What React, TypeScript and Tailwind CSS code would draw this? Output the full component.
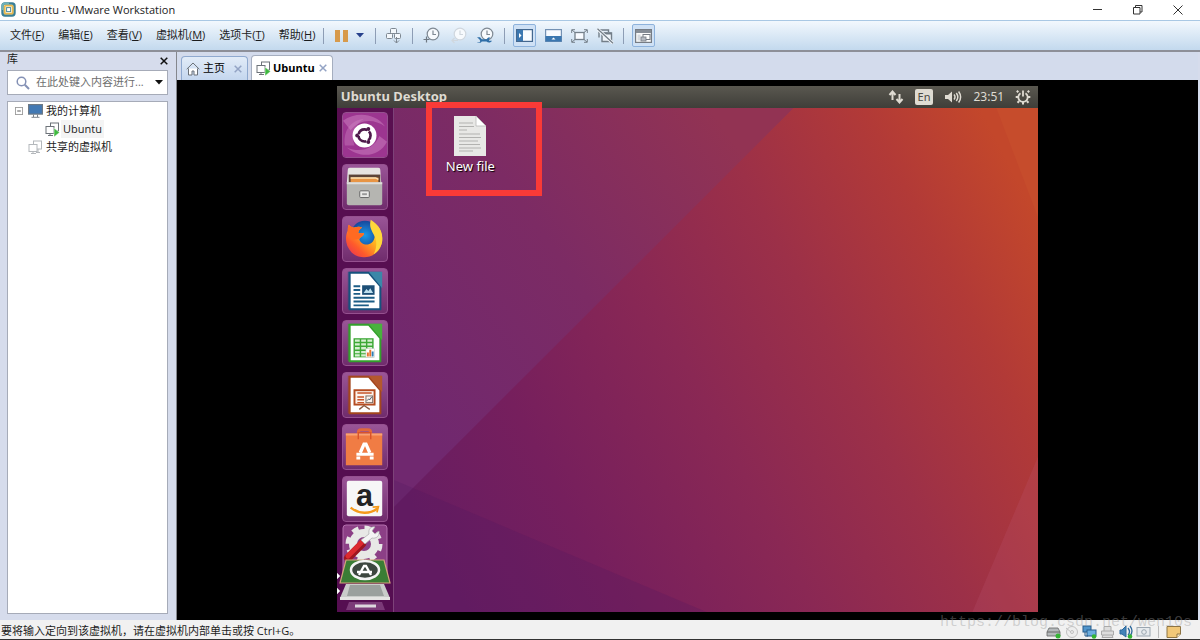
import React from "react";

const uiFont = "font-['Open_Sans','Noto_Sans_CJK_SC',sans-serif]";

const menus = [
  { label: "文件", hotkey: "F" },
  { label: "编辑", hotkey: "E" },
  { label: "查看", hotkey: "V" },
  { label: "虚拟机", hotkey: "M" },
  { label: "选项卡", hotkey: "T" },
  { label: "帮助", hotkey: "H" },
];

function Divider() {
  return <span className="h-4 w-px bg-[#8d9db5]" />;
}

function VmwareLogo() {
  return (
    <svg viewBox="0 0 16 16" className="size-4">
      <rect x="1.5" y="1.5" width="12" height="12" rx="2.5" fill="none" stroke="#3a7f96" strokeWidth="2.4" />
      <path d="M1.5 8V4A2.5 2.5 0 0 1 4 1.5H8" fill="none" stroke="#6fb2b8" strokeWidth="2" />
      <rect x="3.7" y="3.7" width="8" height="8" rx="1" fill="#fff" stroke="#e7b84c" strokeWidth="1.8" />
      <rect x="5.6" y="5.6" width="4" height="4" fill="#fff" stroke="#4f8d9d" strokeWidth="1" />
    </svg>
  );
}

function SendKeysIcon() {
  return (
    <svg viewBox="0 0 16 16" className="size-4" fill="#f4f8fc" stroke="#7d8791">
      <rect x="4.5" y="0.5" width="6" height="5" rx="1" />
      <rect x="0.5" y="5.5" width="6" height="5" rx="1" />
      <rect x="8.5" y="5.5" width="6" height="5" rx="1" />
      <path d="M10.5 9v6M8 12.500l2.500 2.500 2.500-2.500" fill="none" />
    </svg>
  );
}

type ClockProps = { kind: "take" | "revert" | "manage" };

function ClockIcon({ kind }: ClockProps) {
  const stroke = kind === "revert" ? "#d0d7de" : "#7f8993";
  return (
    <svg viewBox="0 0 17 17" className="size-[17px]" fill="none">
      <circle cx="10" cy="7" r="5.8" fill="#f7fafd" stroke={stroke} strokeWidth="1.2" />
      <path d="M10 3.5V7.5H13" stroke={stroke} strokeWidth="1.2" />
      {kind === "take" && <path d="M3.5 9.500v6M.5 12.500h6" stroke="#6e7882" strokeWidth="1.2" />}
      {kind === "revert" && <path d="M8 13.500H2M4.500 11L2 13.500L4.500 16" stroke={stroke} strokeWidth="1.2" />}
      {kind === "manage" && (
        <path d="M0 10.200h3l1.800 2h4.700l1.700-1.700h2.300l-1.500 1.700v1.600h3c-1 2-4 2.400-5.500.6H4.800c-1.300 1.900-3.600 2-4.800 1h2.500l.8-1.500-1-1.700z" fill="#2f6fa8" />
      )}
    </svg>
  );
}

function SidebarViewIcon() {
  return (
    <svg viewBox="0 0 17 13" className="h-[13px] w-[17px]">
      <rect x=".6" y=".6" width="15.8" height="11.8" fill="#f8fbff" stroke="#44688f" strokeWidth="1.2" />
      <rect x="1" y="1" width="6" height="11" fill="#3b77b0" />
      <path d="M3 4l2.500 2.500L3 9z" fill="#fff" />
    </svg>
  );
}

function ThumbnailViewIcon() {
  return (
    <svg viewBox="0 0 17 13" className="h-[13px] w-[17px]">
      <rect x=".6" y=".6" width="15.8" height="11.8" fill="#f8fbff" stroke="#7391b3" strokeWidth="1.2" />
      <rect x=".5" y="7" width="16" height="5.5" fill="#3b77b0" />
      <path d="M6.500 10.500l2-2 2 2z" fill="#fff" />
    </svg>
  );
}

function FullscreenIcon() {
  return (
    <svg viewBox="0 0 17 14" className="h-[14px] w-[17px]" fill="none" stroke="#75808a">
      <rect x="4" y="3.5" width="9" height="7" fill="#f8fbff" strokeWidth="1.3" />
      <path d="M.7 4V.7H4M13 .7h3.300V4M16.300 10v3.300H13M4 13.300H.7V10M1 1l3 2.500M16 1l-3 2.500M16 13l-3-2.500M1 13l3-2.500" />
    </svg>
  );
}

function UnityIcon() {
  return (
    <svg viewBox="0 0 17 16" className="h-4 w-[17px]" fill="none" stroke="#737e88">
      <path d="M2 9.500V2h9.500v2" strokeWidth="1.4" />
      <path d="M5 13.500V5h9.500v8.500z" fill="#eef4fa" strokeWidth="1.4" />
      <path d="M5 5.500h9.500" strokeWidth="2" />
      <path d="M.5.8l15.500 14.500" stroke="#f4f8fc" strokeWidth="3" />
      <path d="M.5.8l15.500 14.500" strokeWidth="1.3" />
    </svg>
  );
}

function ConsoleIcon() {
  return (
    <svg viewBox="0 0 17 14" className="h-[14px] w-[17px]">
      <rect x=".6" y=".6" width="15.8" height="12.8" fill="#fafafa" stroke="#767c84" strokeWidth="1.2" />
      <rect x="1" y="1" width="15" height="3" fill="#868d96" />
      <rect x="2.5" y="5.5" width="3" height="6" fill="#d5d9de" />
      <rect x="8" y="5.5" width="7" height="5" fill="#fff" stroke="#767c84" />
      <rect x="6" y="8" width="5" height="4" fill="#b6bbc2" stroke="#767c84" strokeWidth=".8" />
    </svg>
  );
}

function VmIcon({ running = true }: { running?: boolean }) {
  const stroke = running ? "#6d7379" : "#b4b8bc";
  return (
    <svg viewBox="0 0 15 15" className="size-[15px] shrink-0" fill="#fff" stroke={stroke}>
      <rect x="5.5" y="1" width="8" height="8" />
      <rect x="1" y="4.5" width="8" height="7" />
      <path d="M3 13.500h5M5 11.500v2" fill="none" />
      {running ? (
        <path d="M9 6v9l5.500-4.500z" fill="#3fb93f" stroke="#fff" strokeWidth=".5" />
      ) : (
        <path d="M8 12.500h4M10 9v3" fill="none" />
      )}
    </svg>
  );
}

function TitleBar() {
  return (
    <header className="flex h-5 shrink-0 items-center bg-white pl-px">
      <VmwareLogo />
      <h1 className="ml-[3px] flex-1 text-[11px] text-[#222]">Ubuntu - VMware Workstation</h1>
      <div className="flex items-center gap-6 pr-[14px] text-[#333]">
        <button aria-label="最小化" className="flex w-4 justify-center">
          <svg viewBox="0 0 10 10" className="size-[10px]" stroke="currentColor"><path d="M0 4.500h9" /></svg>
        </button>
        <button aria-label="还原" className="flex w-4 justify-center">
          <svg viewBox="0 0 10 10" className="size-[10px]" fill="none" stroke="currentColor">
            <path d="M.5 2.500h6.500V9H.5zM2.500 2.500V.5H9V7H7" />
          </svg>
        </button>
        <button aria-label="关闭" className="flex w-4 justify-center">
          <svg viewBox="0 0 10 10" className="size-[10px]" stroke="currentColor"><path d="M.5.5l9 9M9.500.5l-9 9" /></svg>
        </button>
      </div>
    </header>
  );
}

function MenuBar() {
  return (
    <div className="flex h-8 shrink-0 items-center border-t border-b-2 border-t-[#a9c8e4] border-b-[#8d8f98] bg-linear-to-b from-[#f2f8fd] to-[#c3d9ee] pl-[10px]">
      <nav className="flex gap-[14px] text-[11px] text-[#1c1c1c]">
        {menus.map((m) => (
          <button key={m.hotkey} className="whitespace-nowrap">
            {m.label}(<u>{m.hotkey}</u>)
          </button>
        ))}
      </nav>
      <div className="ml-2 flex items-center gap-[10px]">
        <Divider />
        <button aria-label="暂停" className="ml-px flex h-3 gap-[3px]">
          <span className="w-[5px] bg-[#d79a4b]" />
          <span className="w-[5px] bg-[#d79a4b]" />
        </button>
        <button aria-label="电源选项" className="-ml-[2px] mr-px">
          <svg viewBox="0 0 8 5" className="h-[5px] w-2" fill="#27418c"><path d="M0 0h8L4 4.500z" /></svg>
        </button>
        <Divider />
        <button aria-label="发送按键"><SendKeysIcon /></button>
        <Divider />
        <button aria-label="拍摄快照"><ClockIcon kind="take" /></button>
        <button aria-label="恢复快照"><ClockIcon kind="revert" /></button>
        <button aria-label="管理快照"><ClockIcon kind="manage" /></button>
        <Divider />
      </div>
      <div className="ml-2 flex items-center gap-[9px]">
        <button aria-label="显示库" className="flex h-[23px] w-[23px] items-center justify-center rounded-xs border border-[#8db2dc] bg-[#cfe1f5]">
          <SidebarViewIcon />
        </button>
        <button aria-label="缩略图栏"><ThumbnailViewIcon /></button>
        <button aria-label="全屏"><FullscreenIcon /></button>
        <button aria-label="Unity"><UnityIcon /></button>
        <Divider />
        <button aria-label="控制台视图" className="-ml-px flex h-[23px] w-[23px] items-center justify-center rounded-xs border border-[#8db2dc] bg-[#cfe1f5]">
          <ConsoleIcon />
        </button>
      </div>
    </div>
  );
}

function Library() {
  return (
    <aside className="flex w-[177px] shrink-0 flex-col border-r border-[#85878d] bg-[#d6dcec] pb-[6px] pl-[7px] pr-2 text-[11px] text-[#1c1c1c]">
      <div className="flex h-[18px] items-center justify-between">
        <h2 className="-mt-1">库</h2>
        <button aria-label="关闭库">
          <svg viewBox="0 0 8 8" className="size-2" stroke="#111" strokeWidth="1.5"><path d="M.7.7l6.600 6.600M7.300.7L.7 7.300" /></svg>
        </button>
      </div>
      <div className="flex h-[25px] items-center border border-[#a6abb8] bg-white pl-2 pr-1">
        <svg viewBox="0 0 14 14" className="size-[14px] shrink-0" fill="none" stroke="#8491b5">
          <circle cx="5.5" cy="5.5" r="4.3" strokeWidth="1.5" />
          <path d="M8.800 8.800l4.200 4.200" strokeWidth="2" />
        </svg>
        <input aria-label="搜索库" placeholder="在此处键入内容进行..." className="ml-[6px] min-w-0 flex-1 outline-none placeholder:text-[#6e6e6e]" />
        <button aria-label="搜索选项">
          <svg viewBox="0 0 8 5" className="h-[5px] w-2" fill="#111"><path d="M0 0h8L4 4.500z" /></svg>
        </button>
      </div>
      <ul className="mt-[6px] flex-1 border border-[#a6abb8] bg-white leading-[18px]">
        <li>
          <button className="flex h-[18px] items-center pl-[7px]">
            <svg viewBox="0 0 9 9" className="size-2" fill="#fff" stroke="#9a9a9a"><rect x=".5" y=".5" width="8" height="8" /><path d="M2.500 4.500h4" stroke="#444" /></svg>
            <svg viewBox="0 0 15 14" className="ml-[5px] h-[14px] w-[15px]">
              <rect x=".6" y=".6" width="13.8" height="9.5" fill="#4279b4" stroke="#6d7985" strokeWidth="1.2" />
              <path d="M5.500 10.500v2.500M9.500 10.500v2.500M3.500 13.300h8" stroke="#7b838b" />
            </svg>
            <span className="ml-[3px]">我的计算机</span>
          </button>
          <ul>
            <li>
              <button className="flex h-[18px] items-center pl-[37px]">
                <VmIcon />
                <span className="ml-px bg-[#f4f4f4] px-[2px]">Ubuntu</span>
              </button>
            </li>
          </ul>
        </li>
        <li>
          <button className="flex h-[18px] items-center pl-5">
            <VmIcon running={false} />
            <span className="ml-[3px]">共享的虚拟机</span>
          </button>
        </li>
      </ul>
    </aside>
  );
}

function TabClose({ label }: { label: string }) {
  return (
    <button aria-label={label}>
      <svg viewBox="0 0 8 8" className="size-2" stroke="#93a3c4" strokeWidth="1.5"><path d="M.7.7l6.600 6.600M7.300.7L.7 7.300" /></svg>
    </button>
  );
}

function TabBar() {
  return (
    <div className="flex h-7 shrink-0 items-end gap-[3px] bg-[#d3dbec] pl-1 text-[11px]">
      <div className="flex h-6 w-[67px] items-center rounded-t-sm border border-b-0 border-[#8fa9cf] bg-linear-to-b from-[#e2ecf8] to-[#c4d6ee] pl-1">
        <button className="flex flex-1 items-center gap-[3px] whitespace-nowrap">
          <svg viewBox="0 0 14 14" className="size-[14px]" fill="#fff" stroke="#6b7178" strokeLinejoin="round">
            <path d="M2.500 6.500v6.500h3.500V9h2v4h3.500V6.500" />
            <path d="M.7 7.200L7 1l6.300 6.200" fill="none" />
          </svg>
          主页
        </button>
        <span className="mr-[5px] flex"><TabClose label="关闭主页" /></span>
      </div>
      <div className="flex h-[25px] w-[82px] items-center rounded-t-sm border border-b-0 border-[#a5aebf] bg-white pl-1">
        <button className="flex flex-1 items-center gap-[2px] font-bold">
          <VmIcon />
          Ubuntu
        </button>
        <span className="mr-[5px] flex"><TabClose label="关闭 Ubuntu" /></span>
      </div>
    </div>
  );
}

function DashIcon() {
  return (
    <svg viewBox="0 0 46 46" className="size-full">
      <rect width="46" height="46" fill="#9c3590" />
      <path d="M0 8C14-2 34 0 44 14C32 6 18 6 8 18z" fill="#d58bc8" opacity=".45" />
      <path d="M46 30C38 46 18 48 4 36C18 42 32 38 38 24z" fill="#d58bc8" opacity=".45" />
      <path d="M2 34C0 18 8 8 22 6C12 12 8 22 12 34z" fill="#d58bc8" opacity=".35" />
      <circle cx="22.5" cy="23.5" r="12.5" fill="#fff" />
      <circle cx="22.5" cy="23.5" r="6.3" fill="none" stroke="#4e1a4b" strokeWidth="2.8" strokeDasharray="11.2 2" strokeDashoffset="5.6" />
      <circle cx="14.8" cy="23.5" r="2" fill="#4e1a4b" />
      <circle cx="26.5" cy="16.7" r="2" fill="#4e1a4b" />
      <circle cx="26.5" cy="30.3" r="2" fill="#4e1a4b" />
    </svg>
  );
}

function FilesIcon() {
  return (
    <svg viewBox="0 0 46 46" className="size-full">
      <path d="M7 3h30q2 0 2 2l1 14H4L5 5q0-2 2-2z" fill="#e6e4e1" />
      <rect x="6" y="10" width="33" height="10" fill="#5c4437" />
      <path d="M8 13h29v6H8z" fill="#e89545" />
      <path d="M8 13.500h26l3 1.500" stroke="#fbe3b5" fill="none" strokeWidth="1.5" />
      <path d="M4 18h37v22q0 2-2 2H6q-2 0-2-2z" fill="#b5b5b1" />
      <path d="M4 18h37v2H4z" fill="#dededb" />
      <rect x="17.5" y="27" width="10" height="7" rx="1" fill="#e9e9e7" stroke="#666" />
      <rect x="20" y="29.5" width="5" height="2" fill="#999" />
    </svg>
  );
}

function FirefoxIcon() {
  return (
    <svg viewBox="0 0 46 46" className="size-full">
      <defs>
        <linearGradient id="fox" x1="1" y1="0" x2="0" y2="1">
          <stop offset="0" stopColor="#fff04a" />
          <stop offset=".4" stopColor="#ffb21f" />
          <stop offset=".7" stopColor="#ff5a2b" />
          <stop offset="1" stopColor="#e42a5c" />
        </linearGradient>
        <radialGradient id="globe">
          <stop offset="0" stopColor="#1a9be8" />
          <stop offset="1" stopColor="#17479c" />
        </radialGradient>
      </defs>
      <circle cx="23" cy="19" r="15" fill="url(#globe)" />
      <path d="M6 8c2 2 4 3 6 3 3-1 6-1 8 0-3 2-4 4-4 6h6c0 3-4 4-5 6 1 5 8 8 13 4 5-5 4-14-1-20 5 2 7 5 8 9 0-3 0-4-1-7 6 8 7 18 1 26-7 9-21 9-28 2C2 30 2 20 5 14c0-2 0-4 1-6z" fill="url(#fox)" />
      <path d="M6 8c2 2 4 3 6 3 3-1 6-1 8 0-3 2-4 4-4 6h6c0 3-4 4-5 6l-7 1C5 21 4 13 6 8z" fill="#ff6a22" />
      <path d="M29 3c8 5 13 12 12 22-1 7-5 11-9 14 3-6 4-13 1-19-3-6-6-9-4-17z" fill="#ffd83a" />
    </svg>
  );
}

type OfficeProps = { color: string; fold: string; children: React.ReactNode };

function OfficeIcon({ color, fold, children }: OfficeProps) {
  return (
    <svg viewBox="0 0 46 46" className="size-full">
      <path d="M5 3h35v39H5z" fill={color} opacity=".55" />
      <path d="M7 4h20l12 14v24H7z" fill="#fff" stroke={color} strokeWidth="2" />
      <path d="M27 3h14v17z" fill={fold} />
      {children}
    </svg>
  );
}

function SoftwareIcon() {
  return (
    <svg viewBox="0 0 46 46" className="size-full">
      <path d="M16 14V8q0-3 3-3h7q3 0 3 3v6" fill="none" stroke="#e0683c" strokeWidth="3" />
      <path d="M3 9h38v33H3z" fill="#f07c44" />
      <path d="M3 9h38v2H3z" fill="#f9a273" />
      <path d="M16 15V8h13v7" fill="none" stroke="#d9532b" strokeWidth="1.5" />
      <path d="M18 29l4-9h2l4 9" fill="none" stroke="#fff" strokeWidth="3.5" />
      <path d="M14 30.500h18" stroke="#fff" strokeWidth="3.2" />
      <path d="M16 36v-3M30 36v-3" stroke="#fff" strokeWidth="4" />
    </svg>
  );
}

function AmazonIcon() {
  return (
    <svg viewBox="0 0 46 46" className="size-full">
      <rect x="4" y="4" width="37" height="37" rx="2" fill="#f7f7f7" />
      <text x="22.5" y="30" textAnchor="middle" fontSize="32" fontWeight="bold" fontFamily="Liberation Sans, sans-serif" fill="#222">a</text>
      <path d="M8 32c9 7 20 7 28 1" fill="none" stroke="#f59a1b" strokeWidth="2.5" />
      <path d="M31 31.500l6-.5-1.500 6" fill="none" stroke="#f59a1b" strokeWidth="1.8" />
    </svg>
  );
}

function StackedIcons() {
  return (
    <svg viewBox="0 0 57 88" className="absolute bottom-0 left-0 h-[88px] w-[57px]">
      <rect x="6" y="1" width="44" height="52" rx="3" fill="#8c3f86" stroke="#b26eac" />
      <circle cx="27" cy="20" r="11" fill="none" stroke="#e8e8e6" strokeWidth="8" />
      <circle cx="27" cy="20" r="16" fill="none" stroke="#e8e8e6" strokeWidth="5" strokeDasharray="6.570 6" />
      <path d="M11 34l14-14" stroke="#9d1620" strokeWidth="8" strokeLinecap="round" />
      <path d="M11 32l14-14" stroke="#dc2a2f" strokeWidth="5" strokeLinecap="round" />
      <path d="M24 16l8-6c-1-5 2-8 6-7l-3 4 3 3 4-3c1 5-3 8-7 7l-7 6z" fill="#f4f4f4" stroke="#aaa" strokeWidth=".7" />
      <path d="M3 59L9 36h38l6 23z" fill="#3a7d35" stroke="#d3a37c" strokeWidth="1.2" />
      <ellipse cx="28" cy="46" rx="14" ry="9" fill="#3d4740" stroke="#f5f5f5" strokeWidth="2.5" />
      <path d="M22 51l5-9h2l5 9M20 48h15" stroke="#fff" strokeWidth="2.3" fill="none" />
      <path d="M3 74L9 60h38l6 14z" fill="#c9ccc9" />
      <path d="M10 72l3-11h30l4 11z" fill="#9aa09d" />
      <path d="M3 73h50v3H3z" fill="#e4e4e2" />
      <path d="M12 78h33l3 8H9z" fill="#7b3a78" />
      <path d="M18 82h21" stroke="#ded7de" strokeWidth="3" />
      <path d="M0 49l3 3-3 3M0 64l3 3-3 3z" fill="#fff" stroke="#ddd" strokeWidth=".5" />
    </svg>
  );
}

const launcher = [
  { name: "Dash", icon: <DashIcon /> },
  { name: "Files", icon: <FilesIcon /> },
  { name: "Firefox", icon: <FirefoxIcon /> },
  {
    name: "Writer",
    icon: (
      <OfficeIcon color="#16527d" fold="#3b87a8">
        <path d="M11 18h7M11 22h7M11 26h7M11 30h22M11 34h22M11 38h16" stroke="#1c5d86" strokeWidth="2" />
        <rect x="20" y="17" width="13" height="10" fill="#1d4f76" />
        <path d="M21.500 25l3-4 2 2 2-3 3 5z" fill="#bfe0ee" />
      </OfficeIcon>
    ),
  },
  {
    name: "Calc",
    icon: (
      <OfficeIcon color="#33a02c" fold="#48b13d">
        <rect x="11" y="18" width="21" height="20" fill="#3da836" />
        <path d="M12.500 20.500h5M19 20.500h5M25.500 20.500h5M12.500 24.500h5M19 24.500h5M25.500 24.500h5M12.500 28.500h5M19 28.500h5M25.500 28.500h5M12.500 32.500h5M19 32.500h5M12.500 36h5M19 36h5" stroke="#d5efd0" strokeWidth="2.4" />
        <rect x="24" y="29" width="9" height="9" fill="#fff" stroke="#ccc" strokeWidth=".6" />
        <path d="M26 37v-4M28.500 37v-7" stroke="#e7742d" strokeWidth="2" />
        <path d="M31 37v-5" stroke="#2f7fb5" strokeWidth="2" />
      </OfficeIcon>
    ),
  },
  {
    name: "Impress",
    icon: (
      <OfficeIcon color="#a3461d" fold="#b4582e">
        <rect x="12" y="18" width="21" height="15" fill="#fdf3ec" stroke="#b54c20" strokeWidth="2" />
        <path d="M15 21h15M15 25h7M15 28h7M15 31h7" stroke="#c6562a" strokeWidth="1.5" />
        <rect x="24" y="24" width="7" height="7" fill="none" stroke="#7a6b63" />
        <path d="M25 29l2-2 1 1 2-3" stroke="#3c5668" fill="none" />
        <path d="M17 38l5-4 6 4" stroke="#8b5a41" fill="none" strokeWidth="1.5" />
      </OfficeIcon>
    ),
  },
  { name: "Software", icon: <SoftwareIcon /> },
  { name: "Amazon", icon: <AmazonIcon /> },
];

function Wallpaper() {
  return (
    <svg viewBox="0 0 702 526" preserveAspectRatio="none" className="absolute inset-0 size-full">
      <defs>
        <linearGradient id="base" gradientUnits="userSpaceOnUse" x1="80" y1="430" x2="690" y2="110">
          <stop offset="0" stopColor="#671d62" />
          <stop offset=".2" stopColor="#761f5d" />
          <stop offset=".45" stopColor="#8a2854" />
          <stop offset=".65" stopColor="#9c3048" />
          <stop offset=".85" stopColor="#b23a37" />
          <stop offset="1" stopColor="#c3472b" />
        </linearGradient>
        <linearGradient id="upper" gradientUnits="userSpaceOnUse" x1="57" y1="300" x2="400" y2="60">
          <stop offset="0" stopColor="#70286f" />
          <stop offset=".5" stopColor="#7c2b64" />
          <stop offset="1" stopColor="#923353" />
        </linearGradient>
      </defs>
      <rect width="702" height="526" fill="url(#base)" />
      <path d="M57 421L457 22H57z" fill="url(#upper)" />
      <path d="M57 394L370 526H57z" fill="#4c1560" opacity=".22" />
      <path d="M660 22L702 132V22z" fill="#e07038" opacity=".12" />
      <path d="M636 526L702 370V526z" fill="#c06080" opacity=".18" />
    </svg>
  );
}

function TopPanel() {
  return (
    <div className="relative flex h-[22px] shrink-0 items-center bg-linear-to-b from-[#5a5850] to-[#3f3e39] pl-1 pr-[7px] text-[#dfdbd2]">
      <span className="flex-1 font-['Noto_Sans',sans-serif] text-[13px] font-bold">Ubuntu Desktop</span>
      <div className="flex items-center gap-[11px]">
        <svg viewBox="0 0 16 14" className="h-[14px] w-4" fill="none" stroke="currentColor" strokeWidth="2">
          <path d="M4.500 10V2M1.500 5l3-3.500L7.500 5M11.500 4v8M8.500 9l3 3.500L14.500 9" />
        </svg>
        <span className="rounded-xs bg-[#dfdbd2] px-[3px] font-['Noto_Sans',sans-serif] text-[11px] leading-4 text-[#4a4943]">En</span>
        <svg viewBox="0 0 18 14" className="h-[14px] w-[18px]" fill="none" stroke="currentColor" strokeWidth="1.5">
          <path d="M1 5h3l4-3.500v11L4 9H1z" fill="currentColor" stroke="none" />
          <path d="M10 4.500q2 2.500 0 5M12.300 3q3 4 0 8M14.600 1.500q4 5.500 0 11" />
        </svg>
        <time className="font-['Noto_Sans',sans-serif] text-[12px]">23:51</time>
        <svg viewBox="0 0 16 16" className="size-4" fill="none" stroke="currentColor">
          <path d="M5.500 4.200a4.700 4.700 0 1 0 5 0" strokeWidth="1.8" />
          <path d="M8 1.500v6" strokeWidth="1.8" />
          <path d="M3.300 3.300L1.800 1.800M12.700 3.300l1.500-1.500M3 8H.7M13 8h2.300M4.200 12L2.500 13.700M11.800 12l1.700 1.700M8 13v2.500" strokeWidth="2" />
        </svg>
      </div>
    </div>
  );
}

function GuestDesktop() {
  return (
    <section className="relative flex aspect-[4/3] h-[calc(100%-8px)] flex-col overflow-hidden">
      <Wallpaper />
      <TopPanel />
      <div className="relative flex min-h-0 flex-1">
        <nav className="relative flex w-[57px] flex-col gap-[6px] overflow-hidden border-r border-[#7d4379] bg-[#4f0a4c]/75 pl-[5px] pt-1">
          {launcher.map((item) => (
            <button key={item.name} aria-label={item.name} className="size-[46px] shrink-0 overflow-hidden rounded-sm border border-[#95508f] bg-linear-to-b from-[#9a5597] to-[#702c6d]">
              {item.icon}
            </button>
          ))}
          <StackedIcons />
        </nav>
        <div className="flex-1 pl-8">
          {/* highlighted desktop file */}
          <div className="-mt-[6px] flex h-[94px] w-[116px] flex-col items-start border-[6px] border-[#f93a37] pl-[14px] pt-2">
            <button className="flex flex-col items-center text-[13px] leading-[18px] text-white [text-shadow:1px_1px_1px_#000]">
              <svg viewBox="0 0 34 40" className="h-10 w-[34px]">
                <path d="M1 0h22l10 10v30H1z" fill="#e8e8e6" />
                <path d="M23 0v10h10z" fill="#fff" stroke="#b8b8b6" strokeWidth=".8" />
                <path d="M6 7h14M6 10.500h15M6 14h8M6 18h21M6 21.500h22M6 25h19M6 28.500h21M6 32h22M6 35h14" stroke="#b2b2b0" strokeWidth="1.2" />
              </svg>
              <span className="mt-px font-['Noto_Sans',sans-serif]">New file</span>
            </button>
          </div>
        </div>
      </div>
    </section>
  );
}

function StatusBar() {
  return (
    <footer className="relative flex h-5 shrink-0 items-center justify-between border-b border-b-[#333] bg-[#f1f1f1] pl-px pr-[19px] text-[11px] text-[#1c1c1c]">
      <p className="pt-1">要将输入定向到该虚拟机，请在虚拟机内部单击或按 Ctrl+G。</p>
      <div className="flex items-center gap-[3px] pt-1">
        <svg viewBox="0 0 15 14" className="h-[14px] w-[15px]">
          <path d="M1 7l2-4h9l2 4v4H1z" fill="#b5b9bb" stroke="#666" strokeWidth=".8" />
          <path d="M1 7h13" stroke="#666" />
          <circle cx="12" cy="11" r="2.5" fill="#35b435" />
        </svg>
        <svg viewBox="0 0 15 14" className="h-[14px] w-[15px]" fill="#eee" stroke="#c2c2c2">
          <circle cx="8" cy="7" r="5.5" />
          <circle cx="8" cy="7" r="1.5" />
          <path d="M2 3l5 4" />
        </svg>
        <svg viewBox="0 0 15 14" className="h-[14px] w-[15px]">
          <rect x="1" y="1" width="8" height="6" fill="#5296cc" stroke="#265d8c" />
          <rect x="5" y="5" width="9" height="6" fill="#6caee0" stroke="#265d8c" />
          <path d="M3 7v4h3" stroke="#265d8c" fill="none" />
          <circle cx="12" cy="11.5" r="2.3" fill="#35b435" />
        </svg>
        <svg viewBox="0 0 15 14" className="h-[14px] w-[15px]" fill="#ddd" stroke="#aaa">
          <path d="M4 6V1.500h7V6M1.500 6h12v4h-12zM3 10l-1 2.500h11L12 10" />
        </svg>
        <svg viewBox="0 0 15 14" className="h-[14px] w-[15px]" fill="none" stroke="#2c689c">
          <path d="M2 5h2l4-4v11L4 9H2z" fill="#4283b8" />
          <path d="M10 3q3 4 0 7M12 1q4 5 0 10" strokeWidth="1.3" />
          <circle cx="12" cy="11.5" r="2.3" fill="#35b435" stroke="none" />
        </svg>
        <svg viewBox="0 0 15 14" className="h-[14px] w-[15px]" fill="#e6eaed" stroke="#9aa6b0">
          <rect x="1" y="2.5" width="13" height="8.5" />
          <circle cx="8" cy="7" r="2.3" />
        </svg>
        <span className="mx-1 h-3 w-px bg-[#bbb]" />
        <svg viewBox="0 0 15 14" className="h-[14px] w-[15px]">
          <path d="M1 1.500h13.500V9L11 12.500H1z" fill="#f1c878" stroke="#8d7444" />
          <path d="M14.500 9H11v3.500" fill="#fff0cb" stroke="#8d7444" />
        </svg>
      </div>
      <span className="pointer-events-none absolute -top-2 right-2 font-['Liberation_Mono',monospace] text-[15px] leading-[22px] text-[#999]/40">
        https://blog.csdn.net/wen10s
      </span>
    </footer>
  );
}

export default function App() {
  return (
    <div className={`flex h-screen flex-col overflow-hidden bg-[#d6dcec] ${uiFont}`}>
      <TitleBar />
      <MenuBar />
      <main className="flex min-h-0 flex-1">
        <Library />
        <div className="flex min-w-0 flex-1 flex-col pr-[2px]">
          <TabBar />
          <div className="flex min-h-0 flex-1 items-start justify-center bg-black pt-[6px]">
            <GuestDesktop />
          </div>
        </div>
      </main>
      <StatusBar />
    </div>
  );
}
